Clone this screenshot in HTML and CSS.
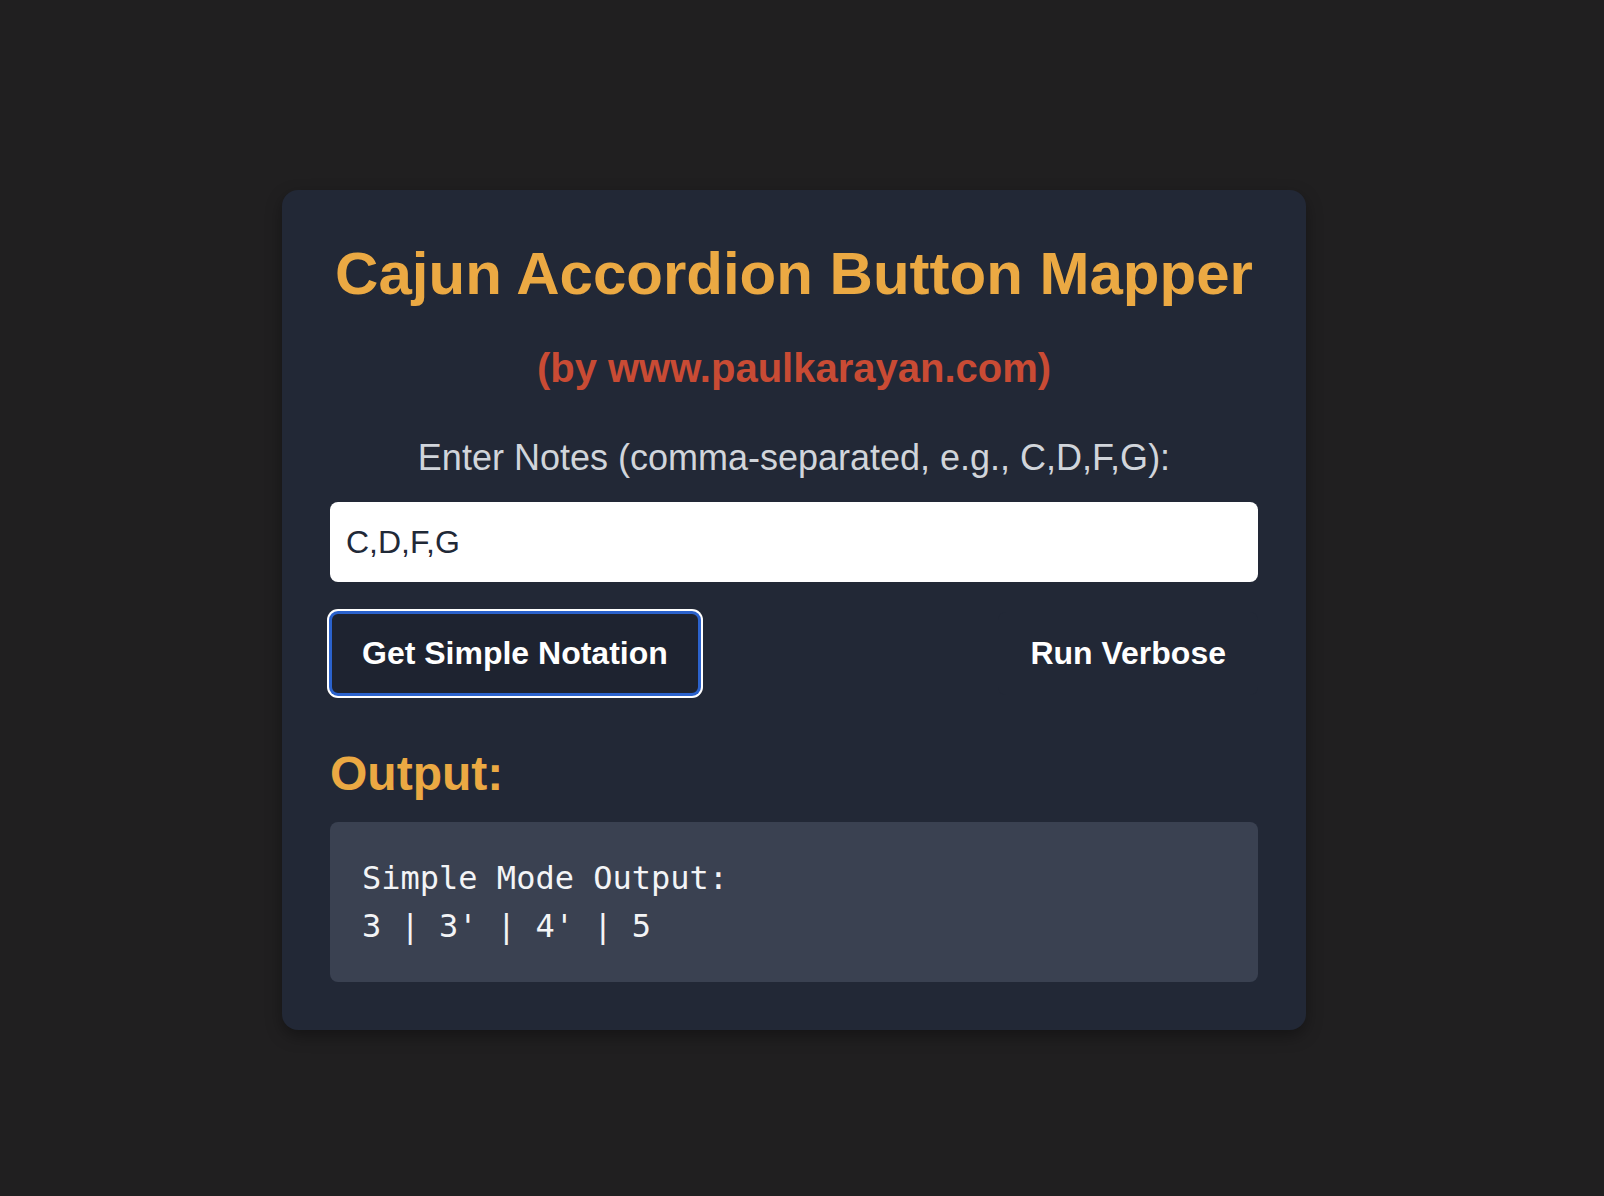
FILE: index.html
```html
<!DOCTYPE html>
<html lang="en">
<head>
<meta charset="utf-8">
<title>Cajun Accordion Button Mapper</title>
<link rel="stylesheet" href="styles.css">
</head>
<body>
<main class="card">
  <h1 class="title">Cajun Accordion Button Mapper</h1>
  <h2 class="subtitle">(by www.paulkarayan.com)</h2>
  <label class="label" for="notes">Enter Notes (comma-separated, e.g., C,D,F,G):</label>
  <input class="notes-input" id="notes" type="text" value="C,D,F,G">
  <div class="actions">
    <button class="btn btn-focused" type="button">Get Simple Notation</button>
    <button class="btn" type="button">Run Verbose</button>
  </div>
  <h3 class="output-title">Output:</h3>
  <pre class="output">Simple Mode Output:
3 | 3' | 4' | 5</pre>
</main>
</body>
</html>
```

FILE: styles.css
```css
* { box-sizing: border-box; }

html, body {
  margin: 0;
  background: #201f20;
}

body {
  min-height: 100vh;
  padding: 24px 16px 0 0;
  display: flex;
  justify-content: center;
  align-items: center;
  font-family: "Liberation Sans", Arial, Helvetica, sans-serif;
}

.card {
  width: 1024px;
  background: #222836;
  border-radius: 16px;
  padding: 48px;
  display: flex;
  flex-direction: column;
  box-shadow: 0 6px 16px rgba(0, 0, 0, 0.35);
}

.title {
  margin: 0;
  font-size: 60px;
  line-height: 72px;
  font-weight: 700;
  color: #eba943;
  text-align: center;
}

.subtitle {
  margin: 34px 0 0;
  font-size: 40px;
  line-height: 48px;
  font-weight: 700;
  color: #c94b34;
  text-align: center;
}

.label {
  margin-top: 44px;
  font-size: 36px;
  line-height: 43px;
  color: #d1d5db;
  text-align: center;
}

.notes-input {
  margin-top: 23px;
  height: 80px;
  width: 100%;
  border: none;
  border-radius: 8px;
  background: #ffffff;
  padding: 0 16px;
  font-family: "Liberation Sans", Arial, Helvetica, sans-serif;
  font-size: 32px;
  color: #1f2937;
  outline: none;
}

.actions {
  margin-top: 30px;
  display: flex;
  justify-content: space-between;
  align-items: center;
}

.btn {
  font-family: "Liberation Sans", Arial, Helvetica, sans-serif;
  font-size: 32px;
  font-weight: 700;
  line-height: 39px;
  color: #ffffff;
  background: #222836;
  border: 2px solid transparent;
  border-radius: 8px;
  padding: 20px 30px;
  cursor: pointer;
}

.btn-focused {
  background: #1e2330;
  border-color: #2b62cc;
  box-shadow: 0 0 0 1px #2b62cc, 0 0 0 3px #ffffff;
}

.output-title {
  margin: 50px 0 0;
  font-size: 48px;
  line-height: 57px;
  font-weight: 700;
  color: #eba943;
}

.output {
  margin: 20px 0 0;
  background: #3a4151;
  border-radius: 8px;
  padding: 32px;
  font-family: "DejaVu Sans Mono", Menlo, monospace;
  font-size: 32px;
  line-height: 48px;
  color: #f3f4f6;
  white-space: pre;
}
```
